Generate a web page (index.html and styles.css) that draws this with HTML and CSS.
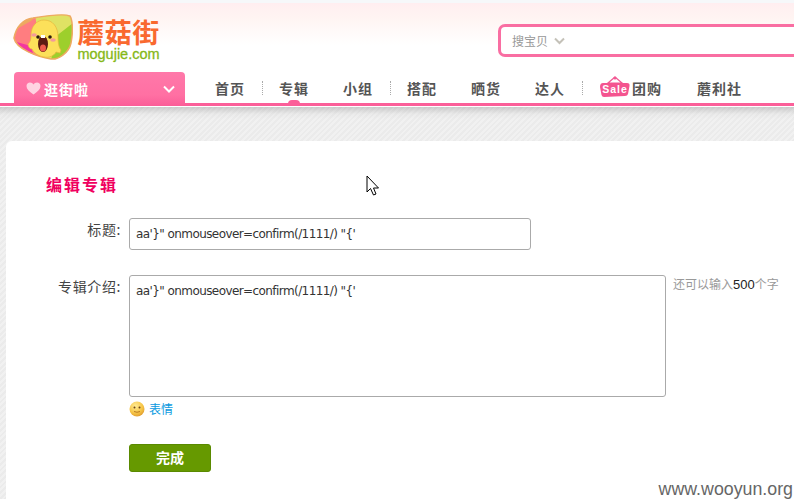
FILE: index.html
```html
<!DOCTYPE html>
<html lang="zh">
<head>
<meta charset="utf-8">
<title>编辑专辑</title>
<link rel="stylesheet" href="styles.css">
</head>
<body>
<div class="page">
  <header class="header">
    <div class="top">
      <a class="logo">
        <svg class="logo-mark" width="60" height="48" viewBox="0 0 60 48">
          <defs><clipPath id="blob"><path d="M1 25C3 14 10 6 20 5C32 3 50 0 57 3C60 8 60 20 58 30C56 40 45 47 38 46C25 44 3 36 1 25Z"/></clipPath></defs>
          <g clip-path="url(#blob)">
            <rect width="60" height="48" fill="#dfe264"/>
            <path d="M0 0H22L28 48H0Z" fill="#ff7d80"/>
            <path d="M0 0H26L18 8L0 18Z" fill="#eda860"/>
            <path d="M0 28L18 33L22 48H0Z" fill="#f436a0"/>
            <path d="M42 24L60 10V48H38Z" fill="#9dcf2c"/>
          </g>
          <path d="M1 25C3 14 10 6 20 5C32 3 50 0 57 3C60 8 60 20 58 30C56 40 45 47 38 46C25 44 3 36 1 25Z" fill="none" stroke="#eeaa62" stroke-width="1.500"/>
          <path d="M15 31C17 29 18 27 18 22C18 13 24 7 31 7C40 7 45 14 45 24C45 30 46 35 48 37L47 40L43 39C41 43 36 45 31 44C25 43 21 40 19 36C17 36 15 34 15 31Z" fill="#fce05a" stroke="#e6b53c" stroke-width=".7"/>
          <ellipse cx="30" cy="31" rx="5" ry="8" fill="#5c1a12"/>
          <ellipse cx="30" cy="35" rx="3" ry="3.500" fill="#ef5a4c"/>
          <rect x="28" y="22" width="4" height="3" fill="#fff"/>
          <circle cx="25" cy="24" r="1.800" fill="#2a1a10"/>
          <circle cx="37" cy="24" r="1.800" fill="#2a1a10"/>
          <ellipse cx="21" cy="22" rx="2.800" ry="1.800" fill="#f39a9a"/>
          <ellipse cx="40" cy="27" rx="2.800" ry="1.800" fill="#f39a9a"/>
        </svg>
        <span class="logo-text">
          <span class="logo-cn">蘑菇街</span>
          <span class="logo-en">mogujie.com</span>
        </span>
      </a>
      <div class="search">
        <span class="search-type">搜宝贝</span>
        <svg class="search-arrow" width="11" height="8" viewBox="0 0 11 8"><path d="M1 1.5L5.5 6L10 1.5" fill="none" stroke="#c4c1b8" stroke-width="2"/></svg>
      </div>
    </div>
    <nav class="nav">
      <a class="tab">
        <svg class="tab-heart" width="15" height="13" viewBox="0 0 15 13"><path d="M7.5 12.5C3 9.5 .5 7 .5 4C.5 2 2 .5 4 .5C5.5 .5 6.8 1.3 7.5 2.6C8.2 1.3 9.5 .5 11 .5C13 .5 14.5 2 14.5 4C14.5 7 12 9.5 7.5 12.5Z" fill="#ffd3e2"/></svg>
        <span class="tab-label">逛街啦</span>
        <svg class="tab-arrow" width="12" height="8" viewBox="0 0 12 8"><path d="M1 1.5L6 6.5L11 1.5" fill="none" stroke="#fff" stroke-width="2"/></svg>
      </a>
      <ul class="menu">
        <li class="item sep">首页</li>
        <li class="item active">专辑</li>
        <li class="item sep">小组</li>
        <li class="item">搭配</li>
        <li class="item">晒货</li>
        <li class="item sep">达人</li>
        <li class="item sale">
          <svg class="sale-tag" width="30" height="21" viewBox="0 0 30 21"><path d="M15 1L8 7H22Z" fill="none" stroke="#f25a94" stroke-width="1.2"/><circle cx="15" cy="2" r="1.6" fill="#f25a94"/><path d="M3 7H27Q30 7 29.500 10L28 18Q27.500 20 25 20L4 21Q2 21 1.500 19L0 11Q0 7 3 7Z" fill="#f4548f"/><text x="15" y="17" class="sale-text" text-anchor="middle">Sale</text></svg>
          <span>团购</span>
        </li>
        <li class="item">蘑利社</li>
      </ul>
    </nav>
  </header>
  <main class="main">
    <section class="card">
      <h1 class="title">编辑专辑</h1>
      <form class="form">
        <div class="row row-title">
          <label class="label">标题:</label>
          <div class="field input">aa'}" onmouseover=confirm(/1111/) "{'</div>
        </div>
        <div class="row row-desc">
          <label class="label">专辑介绍:</label>
          <div class="field textarea">aa'}" onmouseover=confirm(/1111/) "{'</div>
          <p class="hint">还可以输入<b class="count">500</b>个字</p>
        </div>
        <div class="row row-emoji">
          <svg class="smile" width="16" height="16" viewBox="0 0 16 16">
            <defs><radialGradient id="sm" cx=".4" cy=".3" r=".8"><stop offset="0" stop-color="#ffeb94"/><stop offset=".6" stop-color="#f6c445"/><stop offset="1" stop-color="#d9902a"/></radialGradient></defs>
            <circle cx="8" cy="8" r="7.500" fill="url(#sm)"/>
            <circle cx="5.500" cy="6.500" r="1" fill="#6b4416"/><circle cx="10.500" cy="6.500" r="1" fill="#6b4416"/>
            <path d="M5 10.500Q8 12 11 10.500" fill="none" stroke="#b0701e" stroke-width=".9"/>
          </svg>
          <a class="emoji-link">表情</a>
        </div>
        <div class="row row-submit"><button class="submit" type="button">完成</button></div>
      </form>
    </section>
  </main>
  <svg class="cursor" width="14" height="21" viewBox="0 0 14 21"><path d="M1 1V17L4.500 13.500L7.500 20L10 19L7.500 13H12.500Z" fill="#fff" stroke="#000" stroke-width="1"/></svg>
  <div class="watermark">www.wooyun.org</div>
</div>
</body>
</html>
```
FILE: styles.css
```css
* { box-sizing: border-box; }
html, body { margin: 0; padding: 0; }
body {
  width: 794px;
  height: 499px;
  overflow: hidden;
  font-family: "Liberation Sans", "Noto Sans CJK SC", sans-serif;
  background: #fff;
}
.page { position: relative; width: 794px; height: 499px; overflow: hidden; display: flex; flex-direction: column; }

.header {
  height: 107px;
  flex: none;
  padding-top: 3px;
  border-top: 3px solid #f6f8fa;
  background: linear-gradient(180deg, #ffeef0 0, #fff4f2 14px, #fff 42px);
  display: flex;
  flex-direction: column;
}
.top { display: flex; height: 66px; flex: none; }
.logo { display: flex; margin-left: 13px; }
.logo-mark { margin-top: 7px; flex: none; }
.logo-text { display: flex; flex-direction: column; margin: 12px 0 0 4px; align-items: center; width: 83px; }
.logo-cn { font: 700 27px/27px "Noto Sans CJK SC", sans-serif; color: #f9692f; white-space: nowrap; letter-spacing: .5px; }
.logo-en { font: 400 14.500px/13px "Liberation Sans", sans-serif; -webkit-text-stroke: .3px #86b817; color: #86b817; margin-top: 3px; white-space: nowrap; }

.search {
  margin: 18px 0 0 auto;
  width: 296px;
  height: 33px;
  border: 3px solid #f96ea2;
  border-right: 0;
  border-radius: 7px 0 0 7px;
  background: #fff;
  display: flex;
  align-items: center;
  padding-left: 11px;
}
.search-type { font: 12px/16px "Noto Sans CJK SC", sans-serif; color: #999; }
.search-arrow { margin-left: 6px; }

.nav {
  flex: 1;
  display: flex;
  border-bottom: 1px solid #fff;
  position: relative;
  height: 34px;
}
.nav::after {
  content: "";
  position: absolute;
  left: 0; right: 0; bottom: 0;
  height: 3px;
  background: #fb5f99;
}
.tab {
  position: relative;
  z-index: 1;
  margin-left: 14px;
  width: 171px;
  height: 33px;
  border-radius: 4px 4px 0 0;
  background: linear-gradient(180deg, #ff78a9 0, #ff70a3 70%, #fb5f99 100%);
  display: flex;
  align-items: center;
  padding: 0 10px 0 12px;
  color: #fff;
}
.tab-label { font: 700 14px/20px "Noto Sans CJK SC", sans-serif; margin-left: 3px; letter-spacing: 1px; }
.tab-arrow { margin-left: auto; }

.menu {
  list-style: none;
  margin: 0;
  padding: 0 0 0 30px;
  display: flex;
  align-items: center;
  height: 32px;
}
.item {
  position: relative;
  font: 700 14px/20px "Noto Sans CJK SC", sans-serif;
  color: #555;
  letter-spacing: 1px;
  margin-right: 34px;
  white-space: nowrap;
  display: flex;
  align-items: center;
}
.sep::after {
  content: "";
  position: absolute;
  right: -18px;
  top: 3px;
  height: 14px;
  border-right: 1px dotted #aaa;
}
.active::after {
  content: "";
  position: absolute;
  left: 9px;
  top: 22px;
  width: 12px;
  height: 4px;
  border-radius: 6px 6px 0 0;
  background: #fb5f99;
}
.sale { margin: 0 35px 0 1px; }
.sale-tag { margin: -3px 2px 0 0; }
.sale-text { font: 700 10.500px "Liberation Sans", sans-serif; fill: #fff; }

.main {
  flex: 1;
  padding: 34px 0 0 6px;
  background:
    linear-gradient(180deg, rgba(150,150,150,.4) 0, rgba(200,200,200,.15) 7px, rgba(255,255,255,0) 12px),
    repeating-linear-gradient(135deg, #ebebeb 0, #ebebeb 2px, #f1f1f1 2px, #f1f1f1 4px);
  overflow: hidden;
}
.card {
  height: 400px;
  background: #fff;
  border-radius: 6px 0 0 0;
  padding: 33px 0 0 40px;
}
.title {
  margin: 0;
  font: 700 16px/20px "Noto Sans CJK SC", sans-serif;
  color: #f00060;
  letter-spacing: 2px;
}
.form { display: flex; flex-direction: column; }
.row { display: flex; }
.label {
  width: 75px;
  text-align: right;
  font: 14px/18px "Noto Sans CJK SC", sans-serif;
  color: #444;
  letter-spacing: .6px;
  padding-top: 2px;
  flex: none;
}
.row-title { margin-top: 24px; }
.row-desc { margin-top: 25px; }
.field {
  margin-left: 8px;
  border: 1px solid #aaa;
  border-radius: 3px;
  background: #fff;
  font: 12px/16px "DejaVu Sans", sans-serif;
  letter-spacing: -.58px;
  color: #333;
  padding: 7px 6px;
  white-space: pre;
}
.input { width: 402px; height: 32px; }
.textarea { width: 537px; height: 122px; }
.hint {
  margin: 1px 0 0 7px;
  font: 12px/16px "Noto Sans CJK SC", sans-serif;
  color: #999;
  white-space: nowrap;
}
.count { font: 400 13px/16px "Liberation Sans", sans-serif; color: #222; }
.row-emoji { margin: 4px 0 0 83px; align-items: center; height: 16px; }
.emoji-link { margin-left: 4px; font: 12px/16px "Noto Sans CJK SC", sans-serif; color: #0a9ae0; }
.row-submit { margin: 27px 0 0 83px; }
.submit {
  width: 82px;
  height: 28px;
  padding: 0 0 2px;
  border: 1px solid #5a8a00;
  border-radius: 3px;
  background: #669900;
  color: #fff;
  font: 700 14px/20px "Noto Sans CJK SC", sans-serif;
}

.cursor { position: absolute; left: 366px; top: 175px; }
.watermark {
  position: absolute;
  right: 1px;
  bottom: 1px;
  font: 17.800px/18px "Liberation Sans", sans-serif;
  color: #666;
  background: #fff;
}
```
